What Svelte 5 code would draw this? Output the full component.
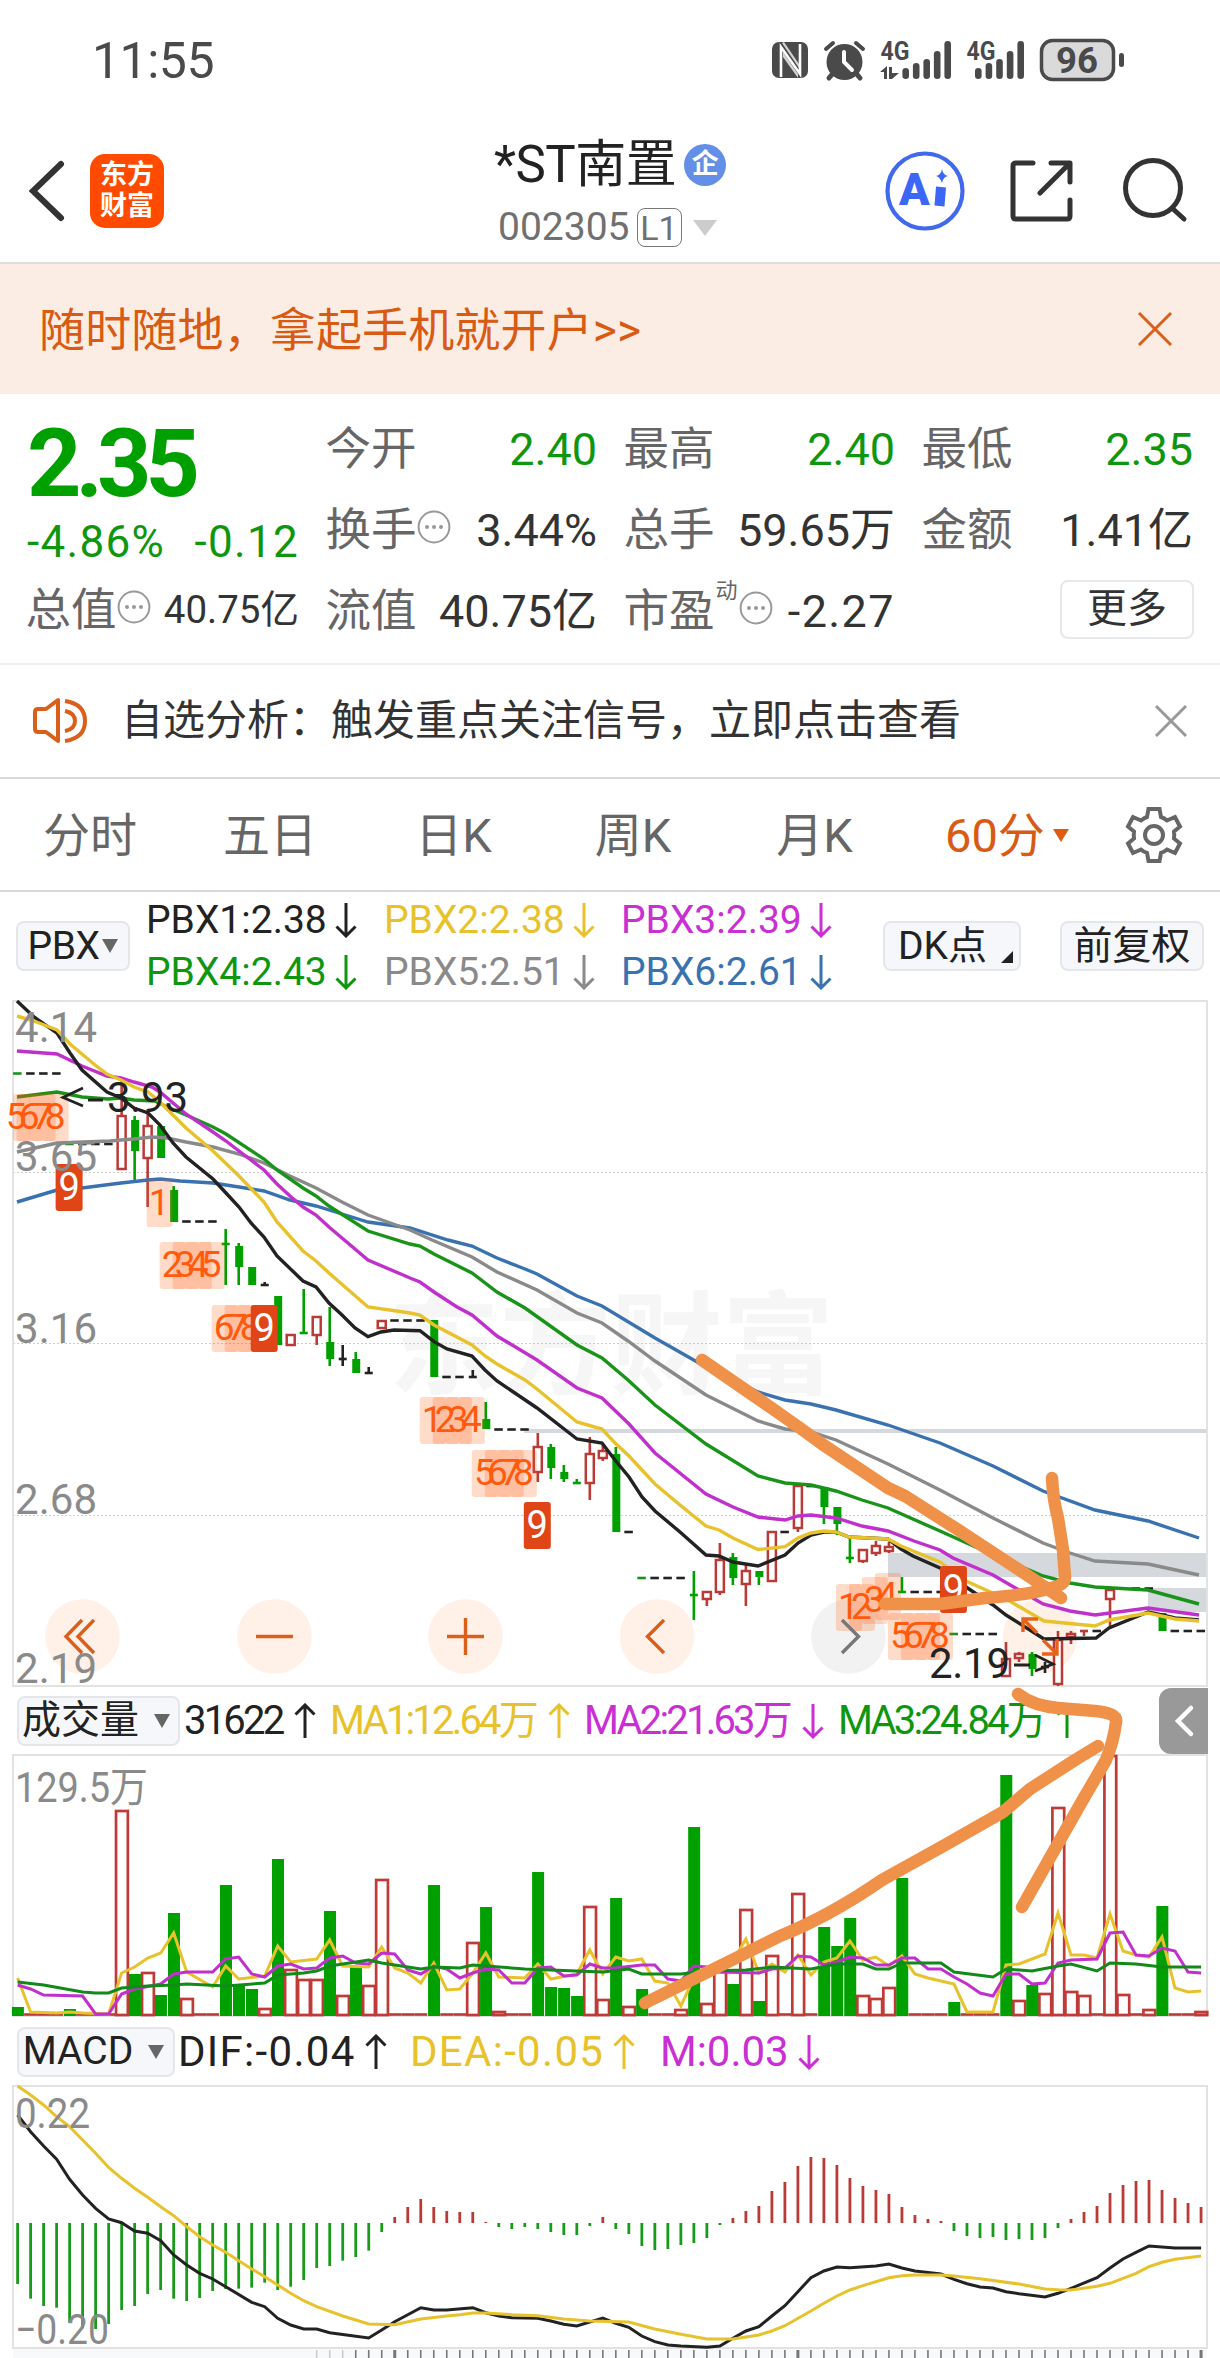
<script>
  const STEP = 13.005;
  const cx = (i) => 17.6 + i * STEP;
  const pts = (list) => list.map((p) => p.join(",")).join(" ");
  const byIndex = (list) => list.map(([i, y]) => `${cx(i).toFixed(1)},${y}`).join(" ");

  const legend = [
    ["PBX1:2.38", "ink"],
    ["PBX2:2.38", "yellow"],
    ["PBX3:2.39", "pink"],
    ["PBX4:2.43", "green"],
    ["PBX5:2.51", "gray"],
    ["PBX6:2.61", "blue"],
  ];

  // index, kind, body top, body bottom, high, low
  const candles = [
    [8, "r", 1116, 1169, 1081, 1169], [9, "g", 1120, 1151, 1116, 1181],
    [10, "r", 1126, 1158, 1109, 1207], [11, "g", 1126, 1158, 1126, 1158],
    [12, "g", 1190, 1222, 1186, 1222], [16, "gd", 1244, 1244, 1229, 1285],
    [17, "g", 1246, 1267, 1243, 1285], [18, "g", 1267, 1285, 1267, 1285],
    [19, "kd", 1285, 1285, 1282, 1285], [20, "g", 1296, 1345, 1296, 1345],
    [21, "r", 1335, 1345, 1335, 1345], [22, "gd", 1333, 1333, 1289, 1334],
    [23, "r", 1317, 1335, 1317, 1345], [24, "g", 1342, 1359, 1307, 1366],
    [25, "kd", 1359, 1359, 1345, 1366], [26, "g", 1359, 1373, 1352, 1373],
    [27, "kd", 1373, 1373, 1367, 1373], [28, "r", 1321, 1328, 1321, 1328],
    [32, "g", 1320, 1377, 1320, 1377], [35, "kd", 1377, 1377, 1370, 1377],
    [36, "g", 1419, 1429, 1402, 1429], [40, "r", 1447, 1472, 1433, 1482],
    [41, "g", 1447, 1468, 1444, 1479], [42, "g", 1472, 1479, 1465, 1482],
    [43, "gd", 1483, 1483, 1479, 1483], [44, "r", 1454, 1483, 1437, 1500],
    [45, "r", 1451, 1458, 1444, 1461], [46, "g", 1454, 1532, 1447, 1532],
    [52, "gd", 1595, 1595, 1571, 1620], [53, "r", 1592, 1599, 1592, 1606],
    [54, "r", 1560, 1592, 1543, 1595], [55, "g", 1557, 1578, 1553, 1585],
    [56, "r", 1571, 1584, 1563, 1606], [57, "g", 1571, 1577, 1571, 1585],
    [58, "r", 1532, 1581, 1532, 1581], [60, "r", 1486, 1528, 1486, 1532],
    [62, "g", 1487, 1507, 1487, 1524], [63, "g", 1507, 1524, 1507, 1535],
    [64, "gd", 1558, 1558, 1537, 1563], [65, "r", 1550, 1561, 1550, 1563],
    [66, "r", 1546, 1553, 1541, 1556], [67, "r", 1547, 1551, 1542, 1553],
    [68, "gd", 1592, 1592, 1577, 1592], [76, "r", 1659, 1676, 1642, 1676],
    [77, "r", 1654, 1658, 1652, 1662], [78, "g", 1654, 1669, 1652, 1676],
    [79, "kd", 1667, 1667, 1662, 1673], [80, "r", 1640, 1684, 1631, 1686],
    [81, "r", 1634, 1637, 1631, 1644], [82, "rd", 1631, 1631, 1631, 1636],
    [84, "r", 1590, 1599, 1590, 1628], [88, "g", 1613, 1631, 1613, 1631],
  ];

  // flat hours: first slot, last slot, y, first one green
  const flats = [
    [0, 3, 1073.5, true], [4, 7, 1144, true], [13, 15, 1221.5], [29, 31, 1320.5],
    [33, 34, 1377], [37, 39, 1429.5], [47, 47, 1532], [48, 51, 1578, true],
    [59, 59, 1532], [61, 61, 1486], [69, 71, 1592], [72, 75, 1634, true],
    [83, 83, 1631], [85, 87, 1588.5], [89, 91, 1631],
  ];
  const dashes = flats.flatMap(([a, b, y, green]) =>
    Array.from({ length: b - a + 1 }, (_, k) => ({ i: a + k, y, green: green && k === 0 }))
  );

  // index, top, digit
  const badges = [
    [0, 1094, 5], [1, 1094, 6], [2, 1094, 7], [3, 1094, 8], [11, 1180, 1],
    [12, 1242, 2], [13, 1242, 3], [14, 1242, 4], [15, 1242, 5],
    [16, 1305, 6], [17, 1305, 7], [18, 1305, 8],
    [32, 1397, 1], [33, 1397, 2], [34, 1397, 3], [35, 1397, 4],
    [36, 1450, 5], [37, 1450, 6], [38, 1450, 7], [39, 1450, 8],
    [64, 1584, 1], [65, 1584, 2], [66, 1577, 3], [67, 1573, 4],
    [68, 1613, 5], [69, 1613, 6], [70, 1613, 7], [71, 1613, 8],
  ];
  const nines = [[4, 1164], [19, 1305], [40, 1502], [72, 1566]];

  const averages = [
    ["#3a72b0", [[17,1202],[57,1190],[82,1188],[121,1183],[148,1180],[160,1179],[180,1181],[213,1183],[239,1187],[264,1191],[290,1200],[316,1206],[342,1214],[368,1222],[410,1228],[448,1240],[472,1246],[497,1258],[525,1269],[537,1274],[577,1296],[602,1306],[655,1338],[706,1367],[758,1392],[785,1400],[811,1404],[836,1410],[888,1425],[940,1443],[993,1466],[1043,1491],[1095,1510],[1148,1521],[1199,1538]]],
    ["#8a8a8a", [[17,1152],[57,1143],[110,1141],[121,1140],[134,1139],[152,1137],[167,1138],[186,1142],[213,1147],[239,1154],[264,1163],[290,1176],[316,1188],[342,1202],[368,1215],[410,1230],[432,1240],[472,1257],[497,1272],[537,1290],[577,1313],[602,1323],[628,1341],[655,1361],[706,1395],[758,1421],[785,1429],[811,1432],[836,1440],[862,1452],[888,1464],[940,1490],[993,1518],[1043,1543],[1070,1553],[1095,1561],[1148,1564],[1199,1575]]],
    ["#1a931a", [[17,1097],[57,1092],[82,1097],[108,1099],[121,1098],[134,1100],[155,1101],[167,1107],[186,1115],[213,1127],[226,1134],[264,1159],[277,1170],[303,1188],[316,1196],[329,1206],[368,1231],[410,1244],[420,1246],[434,1254],[472,1273],[497,1292],[525,1308],[577,1345],[602,1358],[628,1380],[655,1405],[706,1444],[758,1476],[785,1483],[811,1485],[836,1491],[862,1500],[888,1508],[940,1531],[980,1549],[1043,1576],[1070,1583],[1095,1587],[1148,1590],[1199,1604]]],
    ["#c030cc", [[17,1051],[57,1054],[82,1066],[107,1076],[121,1078],[134,1082],[152,1087],[160,1092],[186,1114],[213,1132],[226,1141],[239,1151],[264,1170],[277,1184],[290,1196],[303,1207],[316,1215],[329,1227],[368,1260],[410,1278],[420,1282],[434,1292],[457,1307],[472,1315],[497,1336],[537,1360],[577,1388],[602,1398],[629,1424],[655,1453],[706,1494],[733,1507],[758,1517],[785,1520],[798,1516],[811,1515],[836,1518],[862,1526],[888,1531],[914,1541],[940,1550],[953,1558],[993,1575],[1043,1604],[1070,1611],[1095,1615],[1148,1608],[1199,1615]]],
    ["#222222", [[17,1001],[34,1017],[57,1033],[70,1053],[82,1070],[107,1092],[121,1098],[134,1108],[148,1113],[160,1125],[173,1143],[186,1157],[213,1179],[226,1193],[239,1207],[251,1223],[264,1237],[277,1256],[303,1281],[316,1287],[329,1303],[342,1315],[355,1328],[368,1336.7],[381,1332],[394,1330],[420,1330.7],[434,1341.7],[447,1349],[472,1356],[485,1370],[497,1381],[537,1408],[577,1439],[602,1443],[615,1460],[629,1477],[642,1497],[655,1511],[680,1532],[706,1555],[719,1556],[733,1562],[758,1566],[785,1555],[798,1543],[811,1535],[824,1532],[836,1532],[849,1537],[888,1539],[901,1549],[913,1556],[940,1568],[966,1587],[993,1605],[1006,1615],[1044,1639],[1096,1638],[1109,1628],[1148,1612],[1162,1615],[1175,1618],[1199,1620]]],
    ["#e8c22c", [[17,1016],[34,1021],[57,1030],[70,1044],[95,1065],[107,1074],[121,1080],[134,1087],[148,1092],[160,1102],[186,1128],[213,1151],[239,1176],[264,1202],[277,1222],[303,1251],[316,1261],[329,1273],[368,1307],[410,1313],[420,1315],[434,1325],[472,1345],[485,1356],[497,1364],[525,1380],[537,1389],[577,1422],[602,1429],[615,1443],[629,1456],[655,1484],[680,1505],[706,1526],[719,1530],[733,1538],[758,1549.5],[785,1546.7],[798,1538],[811,1533],[824,1531],[836,1532],[849,1537],[888,1539],[901,1546],[940,1562],[966,1581],[1006,1599],[1044,1621],[1095,1626],[1109,1620],[1148,1613],[1175,1619],[1199,1621]]],
  ];

  const greens = {0:2007,4:2009,9:1974,11:1995,12:1913,16:1885,17:1985,18:1989,20:1859,24:1911,26:1967,32:1885,36:1907,40:1872,41:1987,42:1988,43:1996,46:1898,48:1989,52:1827,55:1984,57:2001,62:1927,63:1946,64:1918,68:1878,72:2002,76:1775,78:1985,88:1906};
  const reds = {8:1811,10:1973,13:1999,19:2009,21:1970,22:1980,23:1980,25:1996,27:1986,28:1880,35:1943,37:2012,44:1907,45:2000,47:2007,51:2010,53:2004,54:1972,56:1910,58:1956,60:1894,65:1996,66:1999,67:1988,77:2001,79:1994,80:1808,81:1992,82:1996,84:1756,85:1995,87:2010,91:2012};
  const thin = Array.from({ length: 92 }, (_, i) => i).filter((i) => !greens[i] && !reds[i]);

  const volumeLines = [
    ["#e8c22c", [[0,1978],[1,2012],[3,2013],[4,2012],[5,2013],[7,2014],[8,1973],[9,1967],[10,1958],[11,1953],[12,1933],[13,1972],[15,1987],[16,1966],[17,1979],[19,1976],[20,1946],[21,1962],[23,1959],[24,1940],[25,1966],[27,1967],[28,1947],[29,1968],[30,1973],[31,1983],[32,1963],[33,1990],[34,1989],[35,1973],[36,1953],[37,1977],[39,1978],[40,1964],[41,1979],[43,1974],[44,1950],[45,1974],[46,1957],[47,1961],[48,1959],[49,1981],[50,1983],[51,2006],[52,1978],[53,1973],[54,1968],[55,1961],[56,1939],[57,1973],[58,1964],[59,1972],[60,1955],[61,1975],[62,1962],[63,1958],[64,1941],[65,1960],[66,1957],[67,1966],[68,1956],[69,1974],[70,1978],[72,1984],[73,2012],[75,2012],[76,1965],[77,1964],[79,1954],[80,1913],[81,1955],[82,1955],[83,1958],[84,1914],[85,1951],[86,1955],[87,1957],[88,1937],[89,1988],[90,1992],[91,1991]]],
    ["#c030cc", [[0,1985],[1,1989],[2,1995],[5,1996],[6,2014],[7,2014],[8,1994],[9,1989],[11,1984],[12,1974],[13,1972],[15,1972],[16,1959],[17,1957],[18,1974],[19,1977],[20,1966],[21,1964],[22,1969],[23,1968],[24,1958],[25,1956],[26,1963],[27,1964],[28,1953],[29,1954],[30,1970],[31,1974],[32,1966],[33,1969],[34,1978],[35,1973],[36,1969],[37,1970],[38,1983],[39,1983],[40,1968],[41,1967],[42,1976],[43,1975],[44,1964],[45,1968],[46,1968],[48,1965],[49,1965],[50,1979],[51,1981],[52,1966],[53,1967],[54,1972],[57,1973],[58,1969],[59,1968],[60,1956],[61,1957],[62,1965],[63,1962],[64,1957],[65,1958],[66,1965],[67,1965],[68,1958],[69,1958],[70,1969],[71,1969],[72,1977],[73,1984],[74,1993],[75,1996],[76,1974],[77,1974],[78,1984],[79,1983],[80,1963],[81,1960],[83,1959],[84,1933],[85,1932],[86,1955],[87,1956],[88,1948],[89,1951],[90,1972],[91,1973]]],
    ["#118a1a", [[0,1982],[2,1985],[5,1992],[6,1993],[7,1993],[8,1988],[10,1986],[12,1985],[13,1984],[16,1986],[19,1983],[20,1975],[22,1973],[23,1971],[24,1966],[27,1960],[28,1963],[31,1969],[32,1967],[34,1968],[35,1965],[39,1969],[45,1972],[47,1969],[48,1974],[51,1974],[53,1971],[56,1970],[58,1967],[61,1969],[63,1964],[65,1964],[66,1969],[67,1969],[68,1963],[71,1963],[72,1972],[75,1977],[76,1969],[78,1971],[80,1966],[81,1964],[83,1971],[84,1963],[86,1964],[88,1967],[91,1967]]],
  ];

  // histogram heights, three units per pixel around the zero line
  const hist = [-183,-227,-249,-254,-299,-316,-318,-303,-261,-249,-213,-201,-227,-234,-225,-204,-198,-197,-194,-179,-201,-191,-171,-135,-129,-113,-102,-83,-27,18,48,72,48,36,33,33,3,-12,-18,-12,-18,-27,-36,-36,-9,18,-18,-33,-69,-81,-78,-66,-60,-45,-6,15,36,51,96,123,171,198,195,174,135,111,99,87,48,24,12,6,-24,-39,-45,-42,-51,-48,-51,-45,-15,12,33,51,90,114,126,129,99,75,60,48];
  const dif = [[0,315],[1,365],[2,408],[3,448],[4,508],[5,555],[6,595],[7,627],[8,638],[9,663],[10,670],[11,692],[12,735],[13,765],[14,790],[15,807],[16,830],[18,877],[19,890],[20,925],[21,945],[22,957],[23,957],[24,968],[27,984],[28,960],[29,935],[31,893],[32,900],[33,900],[35,893],[36,908],[37,918],[38,923],[40,925],[41,933],[42,943],[43,948],[45,924],[46,940],[47,952],[48,978],[49,995],[50,1005],[51,1008],[53,1012],[54,1008],[55,985],[56,963],[57,950],[58,918],[59,887],[60,845],[61,803],[62,783],[63,771],[64,773],[66,768],[67,762],[68,774],[69,783],[71,792],[72,808],[73,821],[74,831],[75,834],[76,845],[77,851],[79,861],[80,850],[81,835],[83,803],[84,774],[85,747],[86,727],[87,708],[89,714],[91,714]];
  const dea = [[0,228],[1,255],[2,285],[3,320],[4,350],[5,390],[6,430],[7,472],[8,505],[9,535],[10,562],[11,590],[12,617],[13,650],[14,680],[15,705],[16,727],[17,752],[18,777],[19,800],[20,825],[21,850],[22,872],[23,890],[25,918],[27,942],[29,944],[31,927],[33,918],[34,914],[35,909],[36,909],[38,914],[40,917],[42,927],[44,933],[47,936],[49,957],[51,973],[53,987],[55,987],[57,975],[58,963],[59,947],[61,903],[62,880],[63,858],[64,840],[65,827],[67,803],[68,797],[69,795],[71,795],[72,798],[74,806],[77,822],[79,837],[80,839],[81,840],[83,829],[84,820],[86,790],[87,770],[88,757],[89,748],[91,738]];
  const third = (list) => list.map(([i, v]) => [i, (2010 + v / 3).toFixed(1)]);
  const ticks = Array.from({ length: 69 }, (_, k) => k + 23);

  const signal = [11, 16, 20, 28, 38];
</script>

{#snippet arrow(up)}
  <svg class="arrow" class:up width="22" height="36" viewBox="0 0 22 36">
    <path d="M11 1V34M1.5 24.5L11 34L20.5 24.5" />
  </svg>
{/snippet}

{#snippet more()}
  <svg class="more-dots" width="34" height="34" viewBox="0 0 34 34">
    <circle cx="17" cy="17" r="15.4" fill="none" stroke="#999" stroke-width="2" />
    <g fill="#999"><circle cx="10" cy="17" r="2" /><circle cx="17" cy="17" r="2" /><circle cx="24" cy="17" r="2" /></g>
  </svg>
{/snippet}

<main>
  <div class="status">
    <span class="clock">11:55</span>
    <svg width="354" height="44" viewBox="771 37 354 44" fill="#4a4a4a">
      <rect x="772" y="41" width="36" height="36" rx="7" />
      <path d="M781 76V46L800 73V43" fill="none" stroke="#fff" stroke-width="2.6" />
      <path d="M782 42L784 41L799 63V67Z M783 51L798 73V77L783 56Z" fill="#fff" opacity=".75" />
      <circle cx="844.500" cy="61" r="18" />
      <path d="M826 48L833 42M863 48L856 42" stroke="#4a4a4a" stroke-width="4" stroke-linecap="round" />
      <path d="M834 71L829 77M855 71L860 77" stroke="#4a4a4a" stroke-width="5" stroke-linecap="round" />
      <path d="M844 51V61L852 69" stroke="#fff" stroke-width="4" fill="none" stroke-linecap="round" />
      <text x="880.500" y="59" class="net" textLength="29" lengthAdjust="spacingAndGlyphs">4G</text>
      <text x="966.500" y="59" class="net" textLength="29" lengthAdjust="spacingAndGlyphs">4G</text>
      <path d="M880 71L887 65V78H884V71ZM889 66H892V72H899L892 78H889Z" />
      {#each signal as h, i}
        <rect x={902.4 + i * 10.5} y={78 - h} width="6.600" height={h} rx="3.300" />
        <rect x={975 + i * 10.6} y={78 - h} width="6.600" height={h} rx="3.300" />
      {/each}
      <rect x="1041.500" y="39.500" width="72" height="39" rx="11" fill="#dadada" stroke="#4a4a4a" stroke-width="3.500" />
      <text x="1056" y="72" class="battery" textLength="42" lengthAdjust="spacingAndGlyphs">96</text>
      <rect x="1119" y="52" width="5" height="14" rx="2.500" />
    </svg>
  </div>

  <header>
    <svg class="back" width="38" height="64" viewBox="28 159 38 64"><path d="M61 164L33 191L61 218" fill="none" stroke="#333" stroke-width="6" stroke-linecap="round" /></svg>
    <div class="logo"><span>东方</span><span>财富</span></div>
    <div class="title">
      <div class="name">*ST南置<span class="corp">企</span></div>
      <div class="code">002305<span class="level">L1</span><i></i></div>
    </div>
    <svg width="320" height="84" viewBox="880 149 320 84" fill="none" stroke="#333" stroke-width="5" stroke-linecap="round" stroke-linejoin="round">
      <circle cx="925" cy="191" r="37.500" stroke="#4169ec" stroke-width="4.200" />
      <text x="899" y="205" class="ai" stroke="none">A</text>
      <path d="M941 187L939.500 206" stroke="#3b66f6" stroke-width="10" stroke-linecap="butt" />
      <path d="M942 169Q943 175 948 176Q943 177 942 183Q940 177 936 176Q941 175 942 169Z" fill="#3b66f6" stroke="none" />
      <path d="M1033 163H1016Q1013 163 1013 166V216Q1013 219 1016 219H1067Q1070 219 1070 216V200M1051 163H1070V182M1069 164L1040 193" />
      <circle cx="1153" cy="188" r="27.500" />
      <path d="M1172 208L1184 219" />
    </svg>
  </header>

  <div class="banner">
    <span>随时随地，拿起手机就开户&gt;&gt;</span>
    <svg width="38" height="38" viewBox="0 0 38 38"><path d="M3 3L35 35M35 3L3 35" stroke="#d95f1a" stroke-width="3" /></svg>
  </div>

  <section class="quote">
    <div class="main">
      <b class="price">2.35</b>
      <div class="cell change"><span>-4.86%</span><span>-0.12</span></div>
      <div class="cell small"><label>总值</label>{@render more()}<span>40.75亿</span></div>
    </div>
    <div class="cell"><label>今开</label><span class="green">2.40</span></div>
    <div class="cell"><label>最高</label><span class="green">2.40</span></div>
    <div class="cell"><label>最低</label><span class="green">2.35</span></div>
    <div class="cell"><label>换手</label>{@render more()}<span>3.44%</span></div>
    <div class="cell"><label>总手</label><span>59.65万</span></div>
    <div class="cell"><label>金额</label><span>1.41亿</span></div>
    <div class="cell"><label>流值</label><span>40.75亿</span></div>
    <div class="cell pe"><label>市盈</label><sup>动</sup>{@render more()}<span>-2.27</span></div>
    <div class="cell"><button>更多</button></div>
  </section>

  <div class="notice">
    <svg width="58" height="52" viewBox="30 695 58 52" fill="none" stroke="#d95f1a" stroke-width="4" stroke-linejoin="round">
      <path d="M58 700V741L46 732H38Q35 732 35 729V712Q35 709 38 709H46Z" />
      <path d="M65 711Q75 713 75 721Q75 729 65 731M65 701Q85 704 85 721Q85 738 65 741" />
    </svg>
    <span>自选分析：触发重点关注信号，立即点击查看</span>
    <svg width="36" height="36" viewBox="0 0 36 36"><path d="M3 3L33 33M33 3L3 33" stroke="#999" stroke-width="3" /></svg>
  </div>

  <nav>
    <span>分时</span><span>五日</span><span>日K</span><span>周K</span><span>月K</span>
    <span class="active">60分<i></i></span>
    <svg width="60" height="60" viewBox="-30 -30 60 60" fill="none" stroke="#666" stroke-width="4" stroke-linejoin="miter">
      <path d="M-5.500 -26H5.500L7 -18Q10 -17 13 -14.500L21 -18L26 -8.500L20 -3.500Q20.500 0 20 3.500L26 8.500L21 18L13 14.500Q10 17 7 18L5.500 26H-5.500L-7 18Q-10 17 -13 14.500L-21 18L-26 8.500L-20 3.500Q-20.500 0 -20 -3.500L-26 -8.500L-21 -18L-13 -14.500Q-10 -17 -7 -18Z" />
      <circle r="9" />
    </svg>
  </nav>

  <div class="indicators">
    <button class="pick pbx">PBX<i></i></button>
    <div class="legend">
      {#each legend as [label, tone]}
        <span class={tone}>{label}{@render arrow(false)}</span>
      {/each}
    </div>
    <button class="pick dk">DK点<i></i></button>
    <button class="pick adj">前复权</button>
  </div>

  <svg class="chart" width="1220" height="687" viewBox="0 1000 1220 687">
    <text class="watermark" x="388" y="1386" textLength="446">东方财富</text>
    <g stroke="#ccc" stroke-dasharray="2 2"><path d="M13 1172.500H1207M13 1343.500H1207M13 1515.500H1207" /></g>
    <g fill="#d5d8dd">
      <rect x="524" y="1429" width="683" height="4" />
      <rect x="888" y="1553" width="319" height="24" />
      <rect x="1148" y="1588" width="59" height="24" />
    </g>
    <g fill="#fff0e8">
      {#each [82.5, 274.5, 465.5, 657, 1040] as x}
        <circle cx={x} cy="1636.500" r="37.300" />
      {/each}
      <circle cx="848.500" cy="1636.500" r="37.300" fill="#f2f2f2" />
    </g>
    <rect x="13" y="1001" width="1194" height="685" fill="none" stroke="#e2e2e2" stroke-width="2" />

    {#each dashes as d}
      <path d="M{cx(d.i) - 4.5} {d.y}h8.500" stroke={d.green ? "#1a931a" : "#222"} stroke-width="2.600" />
    {/each}
    {#each candles as [i, kind, top, bottom, high, low]}
      {@const color = kind[0] === "g" ? "#00a000" : kind[0] === "r" ? "#b93b38" : "#222"}
      <path d="M{cx(i)} {high}V{low}" stroke={color} stroke-width="2.600" />
      {#if kind.length === 2}
        <path d="M{cx(i) - 4} {top}h8" stroke={color} stroke-width="2.600" />
      {:else}
        <rect
          x={cx(i) - (kind === "g" ? 3.5 : 4)}
          y={top}
          width="8"
          height={bottom - top}
          fill={kind === "g" ? color : "#fff"}
          stroke={kind === "g" ? "none" : color}
          stroke-width="2.500"
        />
      {/if}
    {/each}

    {#each averages as [color, list]}
      <polyline points={pts(list)} fill="none" stroke={color} stroke-width="3.400" />
    {/each}

    {#each badges as [i, y, n]}
      <rect x={Math.max(13, cx(i) - 14)} {y} width={i === 0 ? 17 : 26} height="47" rx="3" fill="#ff5a0d" opacity=".22" />
    {/each}
    {#each badges as [i, y, n]}
      <text x={cx(i) - 1.5} y={y + 35} class="count">{n}</text>
    {/each}
    {#each nines as [i, y]}
      <rect x={cx(i) - 14} {y} width="27" height="47" rx="3" fill="#e04518" />
      <text x={cx(i) - 0.5} y={y + 36} class="nine">9</text>
    {/each}

    <g class="scale">
      <text x="15" y="1041.500" textLength="82">4.14</text>
      <text x="15" y="1171" textLength="82">3.65</text>
      <text x="15" y="1343" textLength="82">3.16</text>
      <text x="15" y="1514" textLength="82">2.68</text>
      <text x="15" y="1683" textLength="82">2.19</text>
    </g>
    <g fill="none" stroke="#222" stroke-width="2.800">
      <path d="M83 1088L63 1097.500L83 1106M88 1100H103" />
      <path d="M1014 1665H1030M1035 1655L1053 1664L1035 1671" />
    </g>
    <text class="mark" x="107" y="1112" textLength="81">3.93</text>
    <text class="mark" x="929" y="1677.500" textLength="81">2.19</text>

    <g fill="none" stroke="#d95f1a" stroke-width="3.400">
      <path d="M82 1620L66 1636.500L82 1653M94 1620L78 1636.500L94 1653" />
      <path d="M256 1636.500H293M447 1636.500H484M465.500 1618V1655" />
      <path d="M664 1620L647.500 1636.500L664 1653" />
      <path d="M842 1620L858.500 1636.500L842 1653" stroke="#777" />
      <path d="M1037 1633L1023 1619M1023 1632V1619H1038M1043 1640L1057 1654M1057 1639V1654H1042" stroke="#e8631a" />
    </g>
  </svg>

  <div class="bar volume">
    <button class="pick">成交量<i></i></button>
    <span class="ink">31622{@render arrow(true)}</span>
    <span class="yellow">MA1:12.64万{@render arrow(true)}</span>
    <span class="pink">MA2:21.63万{@render arrow(false)}</span>
    <span class="green">MA3:24.84万{@render arrow(true)}</span>
    <div class="drawer"><svg width="22" height="36" viewBox="0 0 22 36"><path d="M18 5L5 18L18 31" fill="none" stroke="#fff" stroke-width="4.500" stroke-linecap="round" /></svg></div>
  </div>

  <svg class="chart" width="1220" height="264" viewBox="0 1754 1220 264">
    <rect x="13" y="1755" width="1194" height="261" fill="none" stroke="#e2e2e2" stroke-width="2" />
    <text class="scale" x="15" y="1802" textLength="133" lengthAdjust="spacingAndGlyphs">129.5万</text>
    {#each thin as i}
      <path d="M{cx(i) - 6.5} 2014.500h13" stroke="#b93b38" stroke-width="2.600" />
    {/each}
    {#each Object.entries(reds) as [i, y]}
      <rect x={cx(+i) - 5.6} {y} width="11.800" height={2015 - y} fill="#fff" stroke="#c03a38" stroke-width="2.700" />
    {/each}
    {#each Object.entries(greens) as [i, y]}
      <rect x={cx(+i) - 5.7} {y} width="12" height={2016 - y} fill="#00a000" />
    {/each}
    {#each volumeLines as [color, list]}
      <polyline points={byIndex(list)} fill="none" stroke={color} stroke-width="3" />
    {/each}
  </svg>

  <div class="bar macd">
    <button class="pick">MACD<i></i></button>
    <span class="ink">DIF:-0.04{@render arrow(true)}</span>
    <span class="yellow">DEA:-0.05{@render arrow(true)}</span>
    <span class="pink">M:0.03{@render arrow(false)}</span>
  </div>

  <svg class="chart" width="1220" height="273" viewBox="0 2085 1220 273">
    <rect x="13" y="2086" width="1194" height="262" fill="none" stroke="#e2e2e2" stroke-width="2" />
    <rect x="13" y="2349" width="1194" height="9" fill="#f8f9fa" />
    {#each hist as h, i}
      <path d="M{cx(i)} 2223v{-h / 3}" stroke={h > 0 ? "#b93b38" : "#1a9a1a"} stroke-width="2.800" />
    {/each}
    <polyline points={byIndex(third(dif))} fill="none" stroke="#222" stroke-width="3" />
    <polyline points={byIndex(third(dea))} fill="none" stroke="#e8c22c" stroke-width="3" />
    <text class="scale" x="15" y="2128" textLength="75" lengthAdjust="spacingAndGlyphs">0.22</text>
    <text class="scale" x="15" y="2344" textLength="94" lengthAdjust="spacingAndGlyphs">−0.20</text>
    {#each ticks as i}
      <path d="M{cx(i)} 2350v8" stroke={i < 26 ? "#ccc" : "#777"} stroke-width={i === 29 || i === 60 || i === 91 ? 3 : 1.6} />
    {/each}
  </svg>

  <!-- pen strokes drawn over the charts -->
  <svg class="pen" width="1220" height="2358" viewBox="0 0 1220 2358">
    <path d="M702 1360L760 1400L800 1428L822 1444L888 1488L905 1496L960 1531L1030 1577L1061 1598" />
    <path d="M1052 1478Q1053 1500 1058 1518L1063 1550L1065 1577Q1065 1584 1055 1587Q1030 1595 985 1598L940 1604H885" />
    <path d="M645 2003L738 1957L780 1936Q830 1916 882 1880L945 1845L1003 1812L1030 1789L1075 1760L1098 1746" />
    <path d="M1018 1694Q1033 1706 1058 1708L1095 1711Q1118 1713 1116 1722Q1114 1740 1106 1760L1081 1803L1022 1907" />
  </svg>
</main>

<style>
  :global(body) {
    background: #fff;
  }
  main {
    position: relative;
    width: 1220px;
    height: 2358px;
    overflow: hidden;
    color: #222;
    font-family: Roboto, "Noto Sans CJK SC", sans-serif;
    line-height: 1;
    white-space: nowrap;
  }
  svg {
    display: block;
    flex: none;
  }
  button {
    box-sizing: border-box;
    padding: 0;
    font: inherit;
    color: inherit;
  }
  .ink { color: #222; }
  .yellow { color: #e8c22c; }
  .pink { color: #c92fd2; }
  .green { color: #0f960f; }
  .gray { color: #8a8a8a; }
  .blue { color: #3a72b0; }

  .status {
    display: flex;
    align-items: center;
    justify-content: space-between;
    height: 119px;
    padding: 0 95px 0 92px;
  }
  .clock {
    font-size: 50px;
    color: #4a4a4a;
    letter-spacing: -0.5px;
    padding-top: 3px;
  }
  .net {
    font-size: 25px;
    font-weight: 700;
  }
  .battery {
    font-size: 36px;
    font-weight: 700;
  }

  header {
    display: flex;
    align-items: center;
    box-sizing: border-box;
    height: 145px;
    padding: 0 20px 0 28px;
    border-bottom: 2px solid #ddd;
  }
  .logo {
    display: flex;
    flex-direction: column;
    justify-content: center;
    align-items: center;
    width: 74px;
    height: 74px;
    margin-left: 24px;
    border-radius: 15px;
    background: #ff4a00;
    color: #fff;
    font-size: 27px;
    font-weight: 700;
    line-height: 31px;
  }
  .title {
    flex: 1;
    margin: 3px 0 0 330px;
  }
  .name {
    display: flex;
    align-items: center;
    height: 66px;
    font-size: 51px;
    letter-spacing: -0.5px;
  }
  .corp {
    width: 42px;
    height: 42px;
    margin-left: 8px;
    border-radius: 50%;
    background: #6390e6;
    color: #fff;
    font-size: 27px;
    font-weight: 700;
    line-height: 40px;
    text-align: center;
    letter-spacing: 0;
  }
  .code {
    display: flex;
    align-items: center;
    height: 50px;
    margin: 5px 0 0 4px;
    color: #707070;
    font-size: 39px;
  }
  .level {
    width: 43px;
    height: 37px;
    margin-left: 7px;
    border: 1.5px solid #777;
    border-radius: 8px;
    font-size: 34px;
    line-height: 38px;
    text-align: center;
  }
  .code i {
    margin-left: 11px;
    border: 12px solid transparent;
    border-top: 16px solid #ccc;
    border-bottom: 0;
  }
  .ai {
    fill: #3b66f6;
    font-size: 45px;
    font-weight: 900;
  }

  .banner {
    display: flex;
    align-items: center;
    justify-content: space-between;
    height: 130px;
    padding: 0 46px 0 39px;
    background: #fcede4;
    color: #d95a12;
    font-size: 46px;
  }
  .banner span {
    letter-spacing: 0.15px;
    padding-top: 2px;
  }

  .quote {
    display: grid;
    grid-template-columns: 272px repeat(3, 270px);
    grid-template-rows: repeat(3, 81px);
    column-gap: 28px;
    box-sizing: border-box;
    height: 271px;
    padding: 15px 26px 0 27px;
    border-bottom: 2px solid #ececec;
  }
  .main {
    grid-row: 1 / 4;
    color: #0f960f;
  }
  .price {
    display: block;
    height: 106px;
    color: #00a000;
    font-size: 95px;
    font-weight: 700;
    letter-spacing: -6px;
    line-height: 109px;
  }
  .cell {
    display: flex;
    align-items: center;
    height: 81px;
    font-size: 45px;
  }
  .cell label {
    margin-left: -1.5px;
    color: #666;
    font-size: 45.5px;
  }
  .cell > span:last-child {
    margin-left: auto;
  }
  .cell > span:not(.green):not(.change span) {
    color: #333;
  }
  .pe > span {
    letter-spacing: 1.4px;
  }
  .more-dots {
    margin-top: -8px;
  }
  .change {
    height: 54px;
    font-size: 44px;
    letter-spacing: 1.3px;
  }
  .small {
    height: 83px;
  }
  .small > span {
    font-size: 38.5px;
  }
  sup {
    align-self: flex-start;
    width: 22px;
    margin: 9px 1px 0 1px;
    color: #666;
    font-size: 22px;
  }
  .cell button {
    width: 134px;
    height: 59px;
    margin: -5px -1px 0 auto;
    border: 2px solid #e6e8ea;
    border-radius: 8px;
    background: #fff;
    color: #333;
    font-size: 40px;
    line-height: 46px;
  }

  .notice {
    display: flex;
    align-items: center;
    box-sizing: border-box;
    height: 114px;
    padding: 0 31px 0 30px;
    border-bottom: 2px solid #d8d8d8;
    color: #333;
    font-size: 42px;
  }
  .notice span {
    flex: 1;
    margin-left: 33px;
  }

  nav {
    display: grid;
    grid-template-columns: 180px 180px 187px 172px 191px 214px 60px;
    align-items: center;
    justify-items: center;
    box-sizing: border-box;
    height: 113px;
    border-bottom: 2px solid #d8d8d8;
    color: #666;
    font-size: 47px;
  }
  nav span {
    padding-top: 2px;
  }
  nav .active {
    display: flex;
    align-items: center;
    justify-self: start;
    margin-left: 35px;
    color: #d95a12;
  }
  .active i {
    margin-left: 8px;
    border: 8px solid transparent;
    border-top: 13px solid #e05a10;
    border-bottom: 0;
  }

  .indicators {
    display: flex;
    align-items: center;
    height: 108px;
    padding-left: 16px;
  }
  .pick {
    display: flex;
    align-items: center;
    justify-content: center;
    height: 50px;
    border: 2px solid #e4e6ea;
    border-radius: 8px;
    background: #f6f7fa;
    font-size: 39px;
  }
  .pick i {
    border: 8px solid transparent;
    border-top: 14px solid #666;
    border-bottom: 0;
  }
  .pbx {
    width: 114px;
    letter-spacing: -0.5px;
  }
  .pbx i {
    margin-left: 3px;
  }
  .dk {
    position: relative;
    justify-content: flex-start;
    width: 138px;
    margin-left: 25px;
    padding-left: 13px;
  }
  .dk i {
    position: absolute;
    right: 6px;
    bottom: 6px;
    border: 0;
    border-left: 12px solid transparent;
    border-bottom: 12px solid #222;
  }
  .adj {
    width: 144px;
    margin-left: 39px;
  }
  .legend {
    display: grid;
    grid-template-columns: 238px 237px 237px;
    grid-auto-rows: 52px;
    margin-left: 16px;
    font-size: 39px;
  }
  .legend span,
  .bar span {
    display: flex;
    align-items: center;
  }
  .legend .arrow {
    margin-left: 8px;
  }
  .arrow {
    fill: none;
    stroke: currentColor;
    stroke-width: 3;
  }
  .arrow.up {
    transform: rotate(180deg);
  }

  .watermark {
    fill: #f6f6f6;
    font-size: 112px;
    font-weight: 700;
  }
  .scale {
    fill: #8a8a8a;
    font-size: 42px;
  }
  .mark {
    fill: #222;
    font-size: 42px;
  }
  .count {
    fill: #ff5a0d;
    font-size: 37px;
    text-anchor: middle;
  }
  .nine {
    fill: #fff;
    font-size: 38px;
    text-anchor: middle;
  }

  .bar {
    position: relative;
    display: grid;
    align-items: center;
    height: 67px;
    padding-left: 17px;
    font-size: 40px;
  }
  .bar .arrow {
    margin-left: 9px;
  }
  .volume {
    grid-template-columns: 167px 146px 254px 254px 260px;
    letter-spacing: -2.8px;
  }
  .volume .arrow {
    margin-left: 12px;
  }
  .volume .pick {
    width: 163px;
    padding-right: 5px;
    letter-spacing: 0;
  }
  .volume .pick i,
  .macd .pick i {
    margin-left: 15px;
  }
  .drawer {
    position: absolute;
    top: 1px;
    right: 12px;
    display: flex;
    align-items: center;
    justify-content: center;
    width: 49px;
    height: 66px;
    border-radius: 12px 0 0 12px;
    background: #999;
  }
  .macd {
    grid-template-columns: 161px 232px 250px 200px;
    font-size: 42px;
    letter-spacing: 1.3px;
  }
  .macd span:last-child {
    letter-spacing: 0;
  }
  .macd .pick {
    width: 158px;
    padding-right: 5px;
    letter-spacing: 0;
  }
  .pen {
    position: absolute;
    top: 0;
    left: 0;
    fill: none;
    stroke: #f0914a;
    stroke-width: 12.5;
    stroke-linecap: round;
    stroke-linejoin: round;
    pointer-events: none;
  }
</style>
